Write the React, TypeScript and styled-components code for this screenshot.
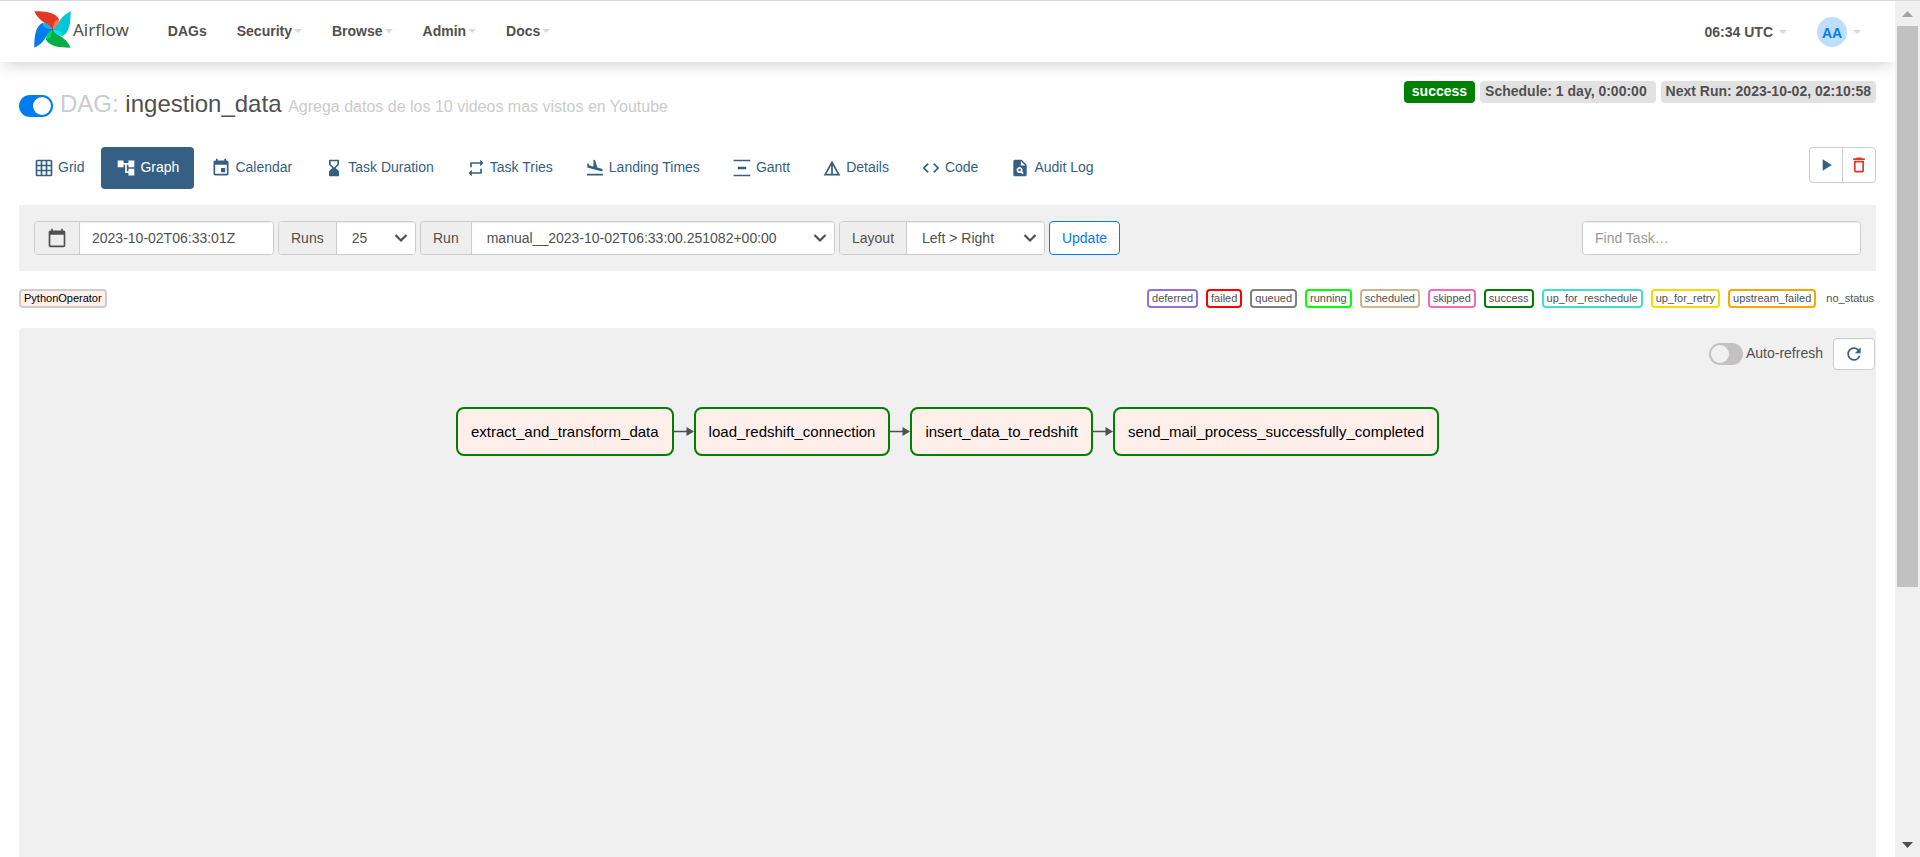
import React from "react";
import styled, { createGlobalStyle } from "styled-components";
import {
  MdGridOn,
  MdAccountTree,
  MdEvent,
  MdHourglassBottom,
  MdRepeat,
  MdFlightLand,
  MdVerticalDistribute,
  MdDetails,
  MdCode,
  MdPlagiarism,
  MdPlayArrow,
  MdDeleteOutline,
  MdCalendarToday,
  MdRefresh,
} from "react-icons/md";

const color = {
  text: "#51504f",
  muted: "#cbcbcb",
  border: "#cccccc",
  panel: "#f0f0f0",
  blue: "#017cee",
  steel: "#355f83",
  red: "#e43921",
};

const GlobalStyle = createGlobalStyle`
  *, *::before, *::after { box-sizing: border-box; }
  html, body { margin: 0; background: #ffffff; }
  body, button, input, select {
    font-family: "Liberation Sans", Arial, sans-serif;
    font-size: 14px;
    line-height: 20px;
    color: ${color.text};
  }
  a { text-decoration: none; color: inherit; }
`;

const Window = styled.div`
  display: flex;
  height: 100vh;
  border-top: 1px solid #d9d9d9;
  overflow: hidden;
`;

const Page = styled.div`
  flex: 1;
  min-width: 0;
  display: flex;
  flex-direction: column;
`;

/* Scrollbar */
const Scrollbar = styled.div`
  width: 25px;
  display: flex;
  flex-direction: column;
  align-items: center;
  background: #f0f0f0;
`;

const ScrollArrow = styled.div`
  height: 25px;
  flex: none;
  display: flex;
  align-items: center;
`;

const ScrollTrack = styled.div`
  flex: 1;
  width: 21px;
`;

const ScrollThumb = styled.div`
  height: 69.6%;
  background: #c1c1c1;
`;

/* Top navigation */
const Navbar = styled.header`
  flex: none;
  display: flex;
  align-items: center;
  justify-content: space-between;
  height: 61px;
  padding: 0 34px;
  background: #ffffff;
  box-shadow: 0 6px 16px -4px rgba(0, 0, 0, 0.2);
`;

const NavGroup = styled.nav`
  display: flex;
  align-items: center;
`;

const Brand = styled.a`
  display: flex;
  align-items: center;
  gap: 2px;
  margin-right: 24px;
  font-family: "Noto Sans", sans-serif;
  font-size: 17px;
  line-height: 36px;
  padding-bottom: 4px;
`;

const NavItem = styled.a`
  display: flex;
  align-items: center;
  gap: 2px;
  padding: 0 15px 2px;
  font-weight: 700;
`;

const UserItem = styled(NavItem)`
  gap: 6px;
  padding: 0 0 0 30px;
`;

const Caret = styled.span`
  border: 4px solid transparent;
  border-top-color: #e1d3e1;
  border-bottom: 0;
`;

const Avatar = styled.span`
  width: 30px;
  height: 30px;
  border-radius: 50%;
  background: #bfdefb;
  color: ${color.blue};
  line-height: 32px;
  text-align: center;
`;

/* Main column */
const Main = styled.main`
  flex: 1;
  min-height: 0;
  display: flex;
  flex-direction: column;
  padding: 19px 19px 0;
`;

const TitleRow = styled.div`
  display: flex;
  justify-content: space-between;
  align-items: flex-start;
  height: 66px;
`;

const TitleGroup = styled.div`
  display: flex;
  align-items: center;
  gap: 7px;
  padding-top: 9px;
`;

const Heading = styled.h1`
  margin: 0;
  font-size: 24px;
  line-height: 28px;
  font-weight: 400;
`;

const Muted = styled.span`
  color: ${color.muted};
`;

const Description = styled.small`
  font-size: 16px;
  color: ${color.muted};
`;

const Switch = styled.input<{ $dim?: boolean }>`
  appearance: none;
  flex: none;
  display: flex;
  align-items: center;
  width: 34px;
  height: 22px;
  margin: 0;
  padding: 2px;
  border-radius: 11px;
  background: ${(p) => (p.$dim ? "#c4c2c1" : color.blue)};
  &::before {
    content: "";
    width: 18px;
    height: 18px;
    border-radius: 50%;
    background: ${(p) => (p.$dim ? "#f0f0f0" : "#ffffff")};
  }
  &:checked { justify-content: flex-end; }
`;

const Badges = styled.div`
  display: flex;
  gap: 5px;
`;

const Badge = styled.a<{ $success?: boolean }>`
  padding: 0 ${(p) => (p.$success ? "8px" : "5px")} 2px;
  border-radius: 4px;
  font-weight: 700;
  line-height: 20px;
  background: ${(p) => (p.$success ? "#008000" : "#e2e2e2")};
  color: ${(p) => (p.$success ? "#ffffff" : color.text)};
`;

const TabRow = styled.div`
  display: flex;
  justify-content: space-between;
  align-items: flex-start;
  margin-bottom: 16px;
`;

const Tabs = styled.nav`
  display: flex;
  gap: 2px;
`;

const Tab = styled.a<{ $active?: boolean }>`
  display: flex;
  align-items: center;
  gap: 4px;
  height: 42px;
  padding: 0 15px;
  border-radius: 4px;
  line-height: 20px;
  background: ${(p) => (p.$active ? color.steel : "transparent")};
  color: ${(p) => (p.$active ? "#ffffff" : color.steel)};
  svg { width: 20px; height: 20px; }
  span { padding-bottom: 2px; }
`;

const ButtonGroup = styled.div`
  display: flex;
`;

const IconButton = styled.button<{ $danger?: boolean; $wide?: boolean }>`
  display: flex;
  align-items: center;
  justify-content: center;
  width: ${(p) => (p.$wide ? "42px" : "34px")};
  height: ${(p) => (p.$wide ? "32px" : "36px")};
  padding: 0;
  border: 1px solid ${color.border};
  border-radius: 4px;
  background: #ffffff;
  color: ${(p) => (p.$danger ? color.red : color.steel)};
  ${ButtonGroup} &:first-child { border-radius: 4px 0 0 4px; }
  ${ButtonGroup} &:last-child { border-radius: 0 4px 4px 0; margin-left: -1px; }
`;

/* Filter bar */
const FilterBar = styled.form`
  display: flex;
  justify-content: space-between;
  padding: 16px 15px;
  background: ${color.panel};
`;

const Filters = styled.div`
  display: flex;
  gap: 4px;
`;

const Field = styled.div<{ $width: number }>`
  display: flex;
  width: ${(p) => p.$width}px;
  height: 34px;
  border: 1px solid ${color.border};
  border-radius: 4px;
  background: #ffffff;
  overflow: hidden;
`;

const Addon = styled.label`
  display: flex;
  align-items: center;
  padding: 0 12px;
  border-right: 1px solid ${color.border};
  background: #eeeeee;
`;

const TextInput = styled.input`
  flex: 1;
  min-width: 0;
  padding: 0 12px;
  border: 0;
  background: #ffffff;
  box-shadow: inset 0 1px 1px rgba(0, 0, 0, 0.08);
  &::placeholder { color: #999999; opacity: 1; }
`;

const SelectWrap = styled.div`
  flex: 1;
  display: grid;
  align-items: center;
  svg {
    grid-area: 1 / 1;
    justify-self: end;
    margin-right: 7px;
    pointer-events: none;
  }
`;

const SelectInput = styled.select`
  grid-area: 1 / 1;
  appearance: none;
  width: 100%;
  height: 32px;
  padding: 0 15px;
  border: 0;
  background: #ffffff;
  box-shadow: inset 0 1px 1px rgba(0, 0, 0, 0.08);
`;

const UpdateButton = styled.button`
  width: 71px;
  height: 34px;
  padding: 0;
  border: 1px solid ${color.blue};
  border-radius: 4px;
  background: #ffffff;
  color: ${color.blue};
`;

/* Legend */
const Legend = styled.div`
  display: flex;
  justify-content: space-between;
  padding: 18px 0 20px;
`;

const States = styled.div`
  display: flex;
  gap: 8px;
`;

const LegendItem = styled.span<{ $color: string; $fill?: string }>`
  padding: 0 3px;
  border: 2px solid ${(p) => p.$color};
  border-radius: 4px;
  font-size: 11px;
  line-height: 15px;
  background: ${(p) => p.$fill || "#ffffff"};
  color: ${(p) => (p.$fill ? "#000000" : color.text)};
`;

const NoStatus = styled.span`
  padding: 2px;
  font-size: 11px;
  line-height: 15px;
`;

/* Graph */
const Canvas = styled.section`
  flex: 1;
  min-height: 0;
  border-radius: 4px 4px 0 0;
  background: ${color.panel};
`;

const CanvasTools = styled.div`
  display: flex;
  align-items: center;
  justify-content: flex-end;
  padding: 10px 1px 0 0;
`;

const RefreshLabel = styled.label`
  display: flex;
  align-items: center;
  gap: 3px;
  margin-right: 10px;
  span { padding-bottom: 3px; }
`;

const Flow = styled.div`
  display: flex;
  align-items: center;
  justify-content: center;
  margin-top: 37px;
`;

const Node = styled.div`
  padding: 3px 13px 0;
  height: 49px;
  border: 2px solid #008000;
  border-radius: 8px;
  background: #ffefeb;
  color: #000000;
  font-size: 15px;
  line-height: 40px;
`;

const EdgeArrow = styled.svg`
  flex: none;
  width: 20px;
  height: 10px;
`;

/* Pinwheel blades, clockwise from the top left one */
const blades = [
  { turn: 0, main: "#e43921", fold: "#ff7557" },
  { turn: 90, main: "#00c7d4", fold: "#11e1ee" },
  { turn: 180, main: "#00ad46", fold: "#04d659" },
  { turn: 270, main: "#017cee", fold: "#0cb6ff" },
];

function Logo() {
  return (
    <svg width="37" height="37" viewBox="0 0 36 36" aria-hidden="true">
      {blades.map(({ turn, main }) => (
        <path
          key={turn}
          transform={`rotate(${turn} 18 18)`}
          d="M0.300 0.300 C12 0.300 21 1.500 24.500 8.500 L18 18 C14 12 5 11 0.300 0.300Z"
          fill={main}
        />
      ))}
      {blades.map(({ turn, fold }) => (
        <path
          key={turn}
          transform={`rotate(${turn} 18 18)`}
          d="M24.500 8.500 C24 13 21.500 16 18 18 L19.500 11.500 C20.500 9.500 22 8.500 24.500 8.500Z"
          fill={fold}
        />
      ))}
      <circle cx="18" cy="18" r="1" fill="#51504f" />
    </svg>
  );
}

function Chevron() {
  return (
    <svg width="14" height="10" viewBox="0 0 14 10" aria-hidden="true">
      <path d="M1.500 2 L7 7.500 L12.500 2" fill="none" stroke="#51504f" strokeWidth="2.200" />
    </svg>
  );
}

function Edge() {
  return (
    <EdgeArrow viewBox="0 0 20 10" aria-hidden="true">
      <path d="M0 4.500 H14" stroke="#51504f" strokeWidth="1.500" />
      <path d="M12.500 0 L20 4.500 L12.500 9 Z" fill="#51504f" />
    </EdgeArrow>
  );
}

const menus = ["Security", "Browse", "Admin", "Docs"];

const tabs = [
  { label: "Grid", Icon: MdGridOn },
  { label: "Graph", Icon: MdAccountTree, active: true },
  { label: "Calendar", Icon: MdEvent },
  { label: "Task Duration", Icon: MdHourglassBottom },
  { label: "Task Tries", Icon: MdRepeat },
  { label: "Landing Times", Icon: MdFlightLand },
  { label: "Gantt", Icon: MdVerticalDistribute },
  { label: "Details", Icon: MdDetails },
  { label: "Code", Icon: MdCode },
  { label: "Audit Log", Icon: MdPlagiarism },
];

const states = [
  ["deferred", "mediumpurple"],
  ["failed", "red"],
  ["queued", "gray"],
  ["running", "lime"],
  ["scheduled", "tan"],
  ["skipped", "hotpink"],
  ["success", "green"],
  ["up_for_reschedule", "turquoise"],
  ["up_for_retry", "gold"],
  ["upstream_failed", "orange"],
];

const tasks = [
  "extract_and_transform_data",
  "load_redshift_connection",
  "insert_data_to_redshift",
  "send_mail_process_successfully_completed",
];

function SelectField(props: { id: string; label: string; value: string; width: number }) {
  return (
    <Field $width={props.width}>
      <Addon htmlFor={props.id}>{props.label}</Addon>
      <SelectWrap>
        <SelectInput id={props.id} defaultValue={props.value}>
          <option>{props.value}</option>
        </SelectInput>
        <Chevron />
      </SelectWrap>
    </Field>
  );
}

export default function App() {
  return (
    <Window>
      <GlobalStyle />
      <Page>
        <Navbar>
          <NavGroup>
            <Brand href="#home">
              <Logo />
              Airflow
            </Brand>
            <NavItem href="#dags">DAGs</NavItem>
            {menus.map((name) => (
              <NavItem href={`#${name.toLowerCase()}`} key={name}>
                {name}
                <Caret />
              </NavItem>
            ))}
          </NavGroup>
          <NavGroup>
            <UserItem href="#time">
              06:34 UTC
              <Caret />
            </UserItem>
            <UserItem href="#user">
              <Avatar>AA</Avatar>
              <Caret />
            </UserItem>
          </NavGroup>
        </Navbar>

        <Main>
          <TitleRow>
            <TitleGroup>
              <Switch type="checkbox" defaultChecked aria-label="Pause or unpause DAG" />
              <Heading>
                <Muted>DAG:</Muted> ingestion_data{" "}
                <Description>Agrega datos de los 10 videos mas vistos en Youtube</Description>
              </Heading>
            </TitleGroup>
            <Badges>
              <Badge href="#runs" $success>
                success
              </Badge>
              <Badge href="#schedule">Schedule: 1 day, 0:00:00&nbsp;</Badge>
              <Badge href="#next">Next Run: 2023-10-02, 02:10:58</Badge>
            </Badges>
          </TitleRow>

          <TabRow>
            <Tabs>
              {tabs.map(({ label, Icon, active }) => (
                <Tab href={`#${label}`} key={label} $active={active}>
                  <Icon />
                  <span>{label}</span>
                </Tab>
              ))}
            </Tabs>
            <ButtonGroup>
              <IconButton type="button" aria-label="Trigger DAG">
                <MdPlayArrow size={20} />
              </IconButton>
              <IconButton type="button" aria-label="Delete DAG" $danger>
                <MdDeleteOutline size={20} />
              </IconButton>
            </ButtonGroup>
          </TabRow>

          <FilterBar>
            <Filters>
              <Field $width={240}>
                <Addon htmlFor="base-date" aria-label="Base date">
                  <MdCalendarToday size={20} />
                </Addon>
                <TextInput id="base-date" defaultValue="2023-10-02T06:33:01Z" />
              </Field>
              <SelectField id="runs" label="Runs" value="25" width={138} />
              <SelectField
                id="run"
                label="Run"
                value="manual__2023-10-02T06:33:00.251082+00:00"
                width={415}
              />
              <SelectField id="layout" label="Layout" value="Left > Right" width={206} />
              <UpdateButton type="button">Update</UpdateButton>
            </Filters>
            <Field $width={279}>
              <TextInput placeholder="Find Task…" aria-label="Find Task" />
            </Field>
          </FilterBar>

          <Legend>
            <LegendItem $color="#cccccc" $fill="#ffefeb">
              PythonOperator
            </LegendItem>
            <States>
              {states.map(([name, tint]) => (
                <LegendItem key={name} $color={tint}>
                  {name}
                </LegendItem>
              ))}
              <NoStatus>no_status</NoStatus>
            </States>
          </Legend>

          <Canvas>
            <CanvasTools>
              <RefreshLabel>
                <Switch type="checkbox" $dim />
                <span>Auto-refresh</span>
              </RefreshLabel>
              <IconButton type="button" aria-label="Refresh" $wide>
                <MdRefresh size={20} />
              </IconButton>
            </CanvasTools>
            <Flow>
              {tasks.map((task, index) => (
                <React.Fragment key={task}>
                  {index > 0 && <Edge />}
                  <Node>{task}</Node>
                </React.Fragment>
              ))}
            </Flow>
          </Canvas>
        </Main>
      </Page>
      <Scrollbar aria-hidden="true">
        <ScrollArrow>
          <svg width="11" height="6" viewBox="0 0 11 6">
            <path d="M0 6 L5.500 0 L11 6Z" fill="#a3a3a3" />
          </svg>
        </ScrollArrow>
        <ScrollTrack>
          <ScrollThumb />
        </ScrollTrack>
        <ScrollArrow>
          <svg width="11" height="6" viewBox="0 0 11 6">
            <path d="M0 0 L11 0 L5.500 6Z" fill="#505050" />
          </svg>
        </ScrollArrow>
      </Scrollbar>
    </Window>
  );
}
